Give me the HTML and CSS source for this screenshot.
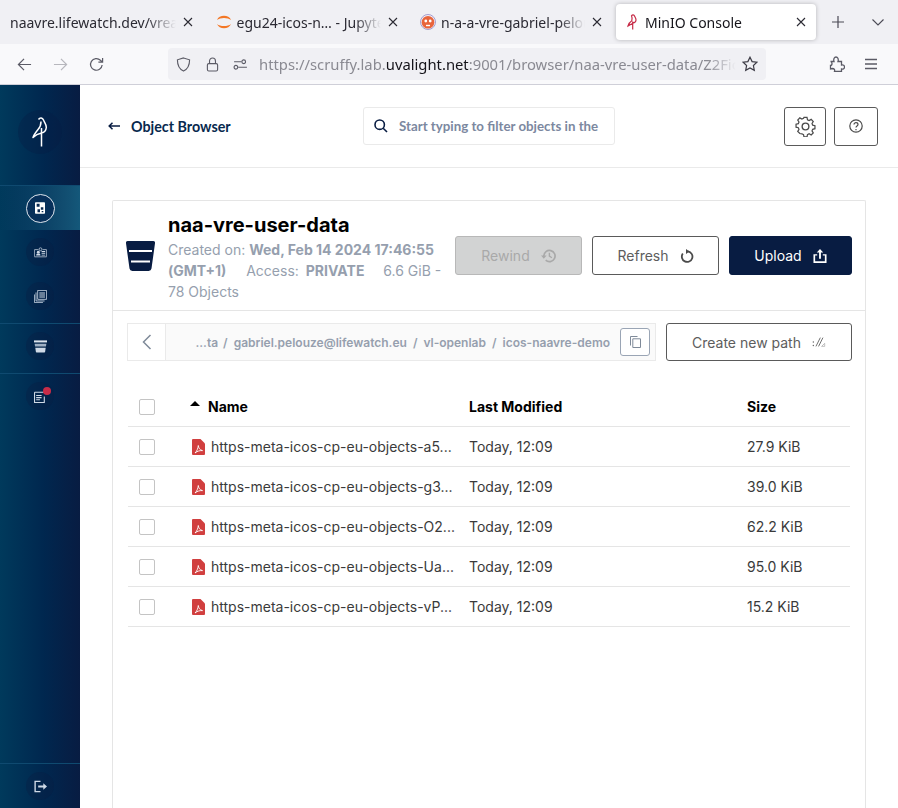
FILE: index.html
```html
<!DOCTYPE html>
<html lang="en">
<head>
<meta charset="utf-8">
<title>MinIO Console</title>
<link rel="stylesheet" href="styles.css">
</head>
<body>
<div class="tabbar">
  <div class="tab">
    <span class="tab-title tab-plain">naavre.lifewatch.dev/vreapp</span>
    <svg class="close" viewBox="0 0 10 10"><path d="M1 1l8 8M9 1l-8 8"/></svg>
  </div>
  <div class="tab">
    <svg class="favicon" viewBox="0 0 16 16"><path d="M1 6C3 .4 13 .4 15 6C12 3.2 4 3.200 1 6ZM1 10C3 15.600 13 15.600 15 10C12 12.800 4 12.800 1 10Z" fill="#f37726"/></svg>
    <span class="tab-title">egu24-icos-n… - JupyterLab</span>
    <svg class="close" viewBox="0 0 10 10"><path d="M1 1l8 8M9 1l-8 8"/></svg>
  </div>
  <div class="tab">
    <svg class="favicon" viewBox="0 0 16 16"><circle cx="8" cy="8" r="7.500" fill="#f4f0f4" stroke="#8f86c4" stroke-width=".8"/><circle cx="8" cy="8.300" r="6.300" fill="#e8643c"/><circle cx="5.800" cy="7" r="1.400" fill="#fff"/><circle cx="10.200" cy="7" r="1.400" fill="#fff"/><path d="M6 11.500h4" stroke="#fff" stroke-width="1.400"/></svg>
    <span class="tab-title">n-a-a-vre-gabriel-pelouze</span>
    <svg class="close" viewBox="0 0 10 10"><path d="M1 1l8 8M9 1l-8 8"/></svg>
  </div>
  <div class="tab tab-active">
    <svg class="favicon favicon-small" viewBox="0 0 10 16"><path d="M4.500 1.800C5.500 .3 7 .6 7.500 2C8 3.400 9.200 4.400 9 6.200C8.800 8 7.400 8.800 5.800 9.200L1 12C1.500 9.800 3 8 4.800 6.800C5.400 5.200 5.200 3.400 4.500 1.800ZM5.700 7.500V15.500" fill="none" stroke="#c72c48" stroke-width="1.200"/></svg>
    <span class="tab-title tab-dark">MinIO Console</span>
    <svg class="close" viewBox="0 0 10 10"><path d="M1 1l8 8M9 1l-8 8"/></svg>
  </div>
  <svg class="tab-add" viewBox="0 0 12 12"><path d="M6 0v12M0 6h12"/></svg>
  <svg class="tab-list" viewBox="0 0 12 7"><path d="M.5.5L6 6l5.500-5.500"/></svg>
</div>

<div class="toolbar">
  <svg class="nav-icon nav-back" viewBox="0 0 16 16"><path d="M15 8H1.500M7.500 2L1.500 8l6 6"/></svg>
  <svg class="nav-icon nav-forward" viewBox="0 0 16 16"><path d="M1 8h13.500M8.500 2l6 6-6 6"/></svg>
  <svg class="nav-icon nav-reload" viewBox="0 0 16 16"><path d="M14 8.500A6.200 6.200 0 1 1 12.200 3.500L14 5.200M14.500 1v4.500H10"/></svg>
  <div class="urlbar">
    <svg class="url-icon url-shield" viewBox="0 0 16 16"><path d="M8 1L14.500 3C14.500 9 12.500 13 8 15C3.500 13 1.500 9 1.500 3Z"/></svg>
    <svg class="url-icon url-lock" viewBox="0 0 14 16"><rect x="1.500" y="7" width="11" height="8" rx="1.500"/><path d="M3.800 7V4.200a3.200 3.200 0 0 1 6.400 0V7"/></svg>
    <svg class="url-icon url-perm" viewBox="0 0 16 12"><circle cx="11.500" cy="3" r="2"/><circle cx="3" cy="9" r="2"/><path d="M1 3h8M5.500 9H15"/></svg>
    <span class="url-text">https://scruffy.lab.<b>uvalight.net</b>:9001/browser/naa-vre-user-data/Z2FicmllbC5wZWxvdXpl</span>
    <svg class="url-icon url-star" viewBox="0 0 16 16"><path d="M8 1.200l2.100 4.400 4.800.6-3.500 3.300.9 4.800L8 12l-4.300 2.300.9-4.800L1.100 6.200l4.800-.6Z"/></svg>
  </div>
  <svg class="nav-icon nav-ext" viewBox="0 0 16 16"><path d="M1.500 5.500H5C4.200 3 5.400 1 7 1s2.800 2 2 4.500h3.500V9c1.800-.5 3 .6 3 2s-1.200 2.500-3 2v2.500H5.500c.6-2-.6-3-2-3l-2 .5V9.500c1 0 1.500-.5 1.500-2s-.5-2-1.500-2Z"/></svg>
  <svg class="nav-icon nav-menu" viewBox="0 0 14 12"><path d="M1 1.500h12M1 6h12M1 10.500h12"/></svg>
</div>

<div class="app">
  <aside class="sidebar">
    <div class="logo">
      <div class="logo-ring">
        <svg viewBox="0 0 16 30" class="logo-bird"><path d="M6.500 2.500C8 .2 10.500 .5 11.500 3C12.500 5.500 14.500 7.500 14.300 10.500C14 13.500 12 15.500 9.500 16C7 16.500 4 17.500 1 20.500C2 17.500 4 15 6 12.500C8 10.500 9 8 9 4.500M9.500 11V29.500" fill="none" stroke="#fff" stroke-width="1.500" stroke-linejoin="round"/></svg>
      </div>
    </div>
    <div class="side-group side-group-first">
      <div class="side-item side-item-active">
        <span class="side-ring side-ring-on">
          <svg class="side-icon" viewBox="0 0 12 14"><path d="M0 1a1 1 0 0 1 1-1h10a1 1 0 0 1 1 1v12a1 1 0 0 1-1 1H1a1 1 0 0 1-1-1Z" fill="#fff"/><path d="M2 2h3.500v3.500H2ZM7 6h3v3H7ZM3 8.500h3v3.500H3ZM8 10.500h2V12H8Z" fill="#0a2a52"/></svg>
        </span>
      </div>
      <div class="side-item">
        <span class="side-ring">
          <svg class="side-icon side-dim" viewBox="0 0 18 14"><path d="M1 3h5M12 3h5a.5.5 0 0 1 .5.5v9a.5.5 0 0 1-.5.5H1a.5.5 0 0 1-.5-.5v-9A.5.5 0 0 1 1 3" fill="none" stroke="#cfd9e6"/><circle cx="6" cy="6.500" r="2" fill="#cfd9e6"/><path d="M3 11c0-2 1.500-2.500 3-2.500s3 .5 3 2.500ZM10.500 5h5v1.200h-5ZM10.500 7.500h5v1.200h-5ZM10.500 10h5v1.200h-5Z" fill="#cfd9e6"/><circle cx="9" cy="2.500" r="2" fill="none" stroke="#cfd9e6"/></svg>
        </span>
      </div>
      <div class="side-item">
        <span class="side-ring">
          <svg class="side-icon side-dim" viewBox="0 0 16 16"><path d="M4.500 .5h11v11h-11Z M2.500 3v10.500H13 M.5 5.500v10H11" fill="none" stroke="#cfd9e6"/><path d="M6.500 3h7v1.200h-7ZM6.500 5.500h7v1.200h-7ZM6.500 8h7v1.200h-7Z" fill="#cfd9e6"/></svg>
        </span>
      </div>
    </div>
    <div class="side-group">
      <div class="side-item">
        <span class="side-ring">
          <svg class="side-icon side-dim" viewBox="0 0 16 15"><path d="M0 0h16v2.500H0Z" fill="#dbe3ec"/><path d="M.8 4h14.400l-.5 3.500H1.300Z" fill="#9fb0c4"/><path d="M1.600 9h12.800l-.7 5a1 1 0 0 1-1 1H3.300a1 1 0 0 1-1-1Z" fill="#cfd9e6"/></svg>
        </span>
      </div>
    </div>
    <div class="side-group">
      <div class="side-item">
        <span class="side-ring">
          <svg class="side-icon side-dim" viewBox="0 0 12 12"><path d="M.5 2h8.500M.5 2v9.500h9V6" fill="none" stroke="#cfd9e6"/><path d="M2 4.500h5v1H2ZM2 6.500h5v1H2ZM2 8.500h3.500v1H2Z" fill="#cfd9e6"/></svg>
          <i class="side-badge"></i>
        </span>
      </div>
    </div>
    <div class="side-group side-group-last">
      <div class="side-item">
        <span class="side-ring">
          <svg class="side-icon side-dim" viewBox="0 0 14 13"><path d="M7 1H1.200v11H7" fill="none" stroke="#cfd9e6" stroke-width="1.500"/><path d="M4.500 5.400h5.500V3l4 3.500-4 3.500V7.600H4.500Z" fill="#cfd9e6"/></svg>
        </span>
      </div>
    </div>
  </aside>

  <main class="content">
    <header class="page-head">
      <a class="back-link">
        <svg class="back-arrow" viewBox="0 0 12 8"><path d="M12 4H1.500M4.500 .8L1.200 4l3.300 3.200"/></svg>
        Object Browser
      </a>
      <div class="filter">
        <svg class="filter-icon" viewBox="0 0 14 14"><circle cx="5.700" cy="5.700" r="4.700"/><path d="M9.200 9.200L13 13"/></svg>
        <span class="filter-text">Start typing to filter objects in the bucket</span>
      </div>
      <div class="head-btns">
        <button class="head-btn head-btn-gear">
          <svg class="gear" viewBox="0 0 20 20"><path d="M8.400 1h3.200l.5 2.500 1.700.8 2.200-1.300 2.200 2.300-1.300 2.100.7 1.700 2.400.6v3.200l-2.400.6-.7 1.700 1.300 2.100-2.200 2.300-2.200-1.300-1.700.8-.5 2.500H8.400l-.5-2.500-1.700-.8L4 18l-2.200-2.300L3.100 13.600l-.7-1.700L0 11.300V8.100l2.400-.6.700-1.700L1.800 3.700 4 1.400l2.200 1.300 1.700-.8Z" transform="translate(1 .5) scale(.9)"/><circle cx="10" cy="10" r="3.200"/></svg>
        </button>
        <button class="head-btn head-btn-help">
          <svg class="help" viewBox="0 0 14 14"><circle cx="7" cy="7" r="6.200"/><path d="M5 5.500C5 3 9 3 9 5.500C9 7 7 7 7 8.500"/><path d="M7 10v1.200"/></svg>
        </button>
      </div>
    </header>

    <section class="card">
      <div class="bucket-info">
        <svg class="bucket-icon" viewBox="0 0 29 30"><path d="M2 0h25a2 2 0 0 1 2 2.300L25.500 27.500a3 3 0 0 1-3 2.500H6.500a3 3 0 0 1-3-2.500L0 2.300A2 2 0 0 1 2 0Z" fill="#081c42"/><path d="M3 10h23M5 20.500h19" stroke="#fff" stroke-width="2"/></svg>
        <div class="bucket-text">
          <h1 class="bucket-name">naa-vre-user-data</h1>
          <p class="bucket-meta">Created on: <b>Wed, Feb 14 2024 17:46:55 (GMT+1)</b> <span class="meta-access">Access:</span> <b class="meta-private">PRIVATE</b> <span class="meta-size">6.6 GiB - 78 Objects</span></p>
        </div>
        <div class="bucket-btns">
          <button class="btn btn-disabled">Rewind
            <svg class="btn-icon" viewBox="0 0 16 14"><path d="M3 7A6 6 0 1 1 5 11.500" fill="none" stroke="#a9a9a9" stroke-width="1.800"/><path d="M0 6.500h6L3 10ZM8.200 3.500h1.500v3.300l2.300 1.400-.7 1.100-3.100-1.800Z" fill="#a9a9a9"/></svg>
          </button>
          <button class="btn btn-outline">Refresh
            <svg class="btn-icon" viewBox="0 0 14 14"><path d="M8 2.400A5.300 5.300 0 1 1 2.800 4.600" fill="none" stroke="#4b4b4b" stroke-width="1.800"/><path d="M6 0v5l3.500-2.500Z" fill="#4b4b4b"/></svg>
          </button>
          <button class="btn btn-primary">Upload
            <svg class="btn-icon" viewBox="0 0 14 15"><path d="M7 0l3.500 3.800H8V10.500H6V3.800H3.500ZM0 5.500h4V7H1.800v6.200h10.400V7H10V5.500h4V15H0Z" fill="#fff"/></svg>
          </button>
        </div>
      </div>

      <div class="objects">
        <div class="path-row">
          <div class="path-box">
            <div class="path-back">
              <svg viewBox="0 0 10 16"><path d="M8.500 1L1.500 8l7 7"/></svg>
            </div>
            <div class="path-crumbs"><span class="crumb-first">...ta</span><i>/</i><span>gabriel.pelouze@lifewatch.eu</span><i>/</i><span>vl-openlab</span><i>/</i><span>icos-naavre-demo</span></div>
            <button class="copy-btn">
              <svg viewBox="0 0 11 12"><path d="M.5 9.500V.5h7"/><path d="M2.800 2.800h7.700v8.700H2.800Z"/></svg>
            </button>
          </div>
          <button class="btn btn-outline btn-path">Create new path
            <svg class="path-icon" viewBox="0 0 16 12"><path d="M4.500 11L9.500 1M7.500 11L12.500 1" stroke="#5d5d5d" stroke-width="1"/><circle cx="1.500" cy="6" r=".8" fill="#5d5d5d"/><circle cx="1.500" cy="10" r=".8" fill="#5d5d5d"/><path d="M11 11l3.500-3.500V11Z" fill="none" stroke="#a8a8a8" stroke-width=".8"/></svg>
          </button>
        </div>

        <div class="table">
          <div class="row row-head">
            <span class="check"></span>
            <span class="col-name"><i class="sort-up"></i>Name</span>
            <span class="col-date">Last Modified</span>
            <span class="col-size">Size</span>
          </div>
          <div class="row">
            <span class="check"></span>
            <span class="col-name"><svg class="pdf" viewBox="0 0 13 16"><use href="#pdf"/></svg>https-meta-icos-cp-eu-objects-a5...</span>
            <span class="col-date">Today, 12:09</span>
            <span class="col-size">27.9 KiB</span>
          </div>
          <div class="row">
            <span class="check"></span>
            <span class="col-name"><svg class="pdf" viewBox="0 0 13 16"><use href="#pdf"/></svg>https-meta-icos-cp-eu-objects-g3...</span>
            <span class="col-date">Today, 12:09</span>
            <span class="col-size">39.0 KiB</span>
          </div>
          <div class="row">
            <span class="check"></span>
            <span class="col-name"><svg class="pdf" viewBox="0 0 13 16"><use href="#pdf"/></svg>https-meta-icos-cp-eu-objects-O2...</span>
            <span class="col-date">Today, 12:09</span>
            <span class="col-size">62.2 KiB</span>
          </div>
          <div class="row">
            <span class="check"></span>
            <span class="col-name"><svg class="pdf" viewBox="0 0 13 16"><use href="#pdf"/></svg>https-meta-icos-cp-eu-objects-Ua...</span>
            <span class="col-date">Today, 12:09</span>
            <span class="col-size">95.0 KiB</span>
          </div>
          <div class="row">
            <span class="check"></span>
            <span class="col-name"><svg class="pdf" viewBox="0 0 13 16"><use href="#pdf"/></svg>https-meta-icos-cp-eu-objects-vP...</span>
            <span class="col-date">Today, 12:09</span>
            <span class="col-size">15.2 KiB</span>
          </div>
        </div>
      </div>
    </section>
  </main>
</div>

<svg class="defs" width="0" height="0">
  <symbol id="pdf" viewBox="0 0 13 16">
    <path d="M1 0h7.500L13 4.500V15a1 1 0 0 1-1 1H1a1 1 0 0 1-1-1V1a1 1 0 0 1 1-1Z" fill="#d13f3f"/>
    <path d="M6.300 6.500C6.600 9 7.800 11 10.500 11.600C8 11.400 5.500 12 3 14C4.800 12.500 6 9.500 6.300 6.500Z" fill="none" stroke="#fff" stroke-width=".9"/>
  </symbol>
</svg>
</body>
</html>
```

FILE: styles.css
```css
html, body {
  margin: 0;
  height: 808px;
  overflow: hidden;
  background: #fff;
  font-family: "Inter", "Liberation Sans", sans-serif;
}
button {
  font-family: inherit;
  cursor: pointer;
}

/* browser chrome */
.tabbar {
  height: 44px;
  background: #f0f0f4;
  display: flex;
  align-items: center;
  padding-left: 3px;
  box-sizing: border-box;
  font-family: "Noto Sans", sans-serif;
  font-size: 14px;
  color: #2b2a33;
}
.tab {
  width: 200px;
  height: 36px;
  margin-right: 4.5px;
  padding: 0 10px 0 7px;
  box-sizing: border-box;
  display: flex;
  align-items: center;
  flex: none;
}
.tab-active {
  background: #fff;
  border-radius: 4px;
  box-shadow: 0 0 4px rgba(0, 0, 0, .25);
  margin-left: -.5px;
  padding-left: 11px;
}
.tab-title {
  flex: 1;
  min-width: 0;
  white-space: nowrap;
  overflow: hidden;
  -webkit-mask-image: linear-gradient(to right, #000 82%, transparent);
  mask-image: linear-gradient(to right, #000 82%, transparent);
}
.tab-dark {
  color: #15141a;
}
.favicon {
  width: 16px;
  height: 16px;
  margin: 0 5px 0 1px;
  flex: none;
}
.favicon-small {
  width: 10px;
  margin: 0 8px 0 0;
}
.close {
  width: 10px;
  height: 10px;
  margin-left: 7px;
  flex: none;
  fill: none;
  stroke: #2b2a33;
  stroke-width: 1.1;
}
.tab-add {
  width: 12px;
  height: 12px;
  margin-left: 11.5px;
  fill: none;
  stroke: #4b4a55;
  stroke-width: 1.2;
}
.tab-list {
  width: 12px;
  height: 7px;
  margin-left: 28px;
  fill: none;
  stroke: #4b4a55;
  stroke-width: 1.1;
}

.toolbar {
  height: 41px;
  box-sizing: border-box;
  background: #f9f9fb;
  border-bottom: 1px solid #cfcfd8;
  display: flex;
  align-items: center;
  padding-left: 17px;
}
.nav-icon {
  flex: none;
  fill: none;
  stroke: #5b5b66;
  stroke-width: 1.3;
  width: 15px;
  height: 15px;
}
.nav-forward {
  margin-left: 21px;
  stroke: #b7b7bd;
}
.nav-reload {
  margin-left: 21px;
}
.urlbar {
  width: 598px;
  height: 32px;
  margin: 0 0 0 64px;
  background: #f0f0f4;
  border-radius: 4px;
  display: flex;
  align-items: center;
  padding-left: 8px;
  box-sizing: border-box;
  flex: none;
}
.url-icon {
  flex: none;
  fill: none;
  stroke: #5b5b66;
  stroke-width: 1.2;
}
.url-shield {
  width: 15px;
  height: 15px;
}
.url-lock {
  width: 13px;
  height: 15px;
  margin-left: 15px;
}
.url-perm {
  width: 15px;
  height: 11px;
  margin-left: 14px;
}
.url-text {
  margin-left: 11px;
  width: 477px;
  flex: none;
  overflow: hidden;
  white-space: nowrap;
  font-family: "Noto Sans", sans-serif;
  font-size: 14.8px;
  color: #8a8a92;
  -webkit-mask-image: linear-gradient(to right, #000 94%, transparent);
  mask-image: linear-gradient(to right, #000 94%, transparent);
}
.url-text b {
  font-weight: 400;
  color: #15141a;
}
.url-star {
  width: 16px;
  height: 16px;
  margin-left: 6px;
  stroke: #3c3b45;
}
.nav-ext {
  width: 16px;
  height: 16px;
  margin-left: 63px;
}
.nav-menu {
  width: 14px;
  height: 12px;
  margin-left: 19px;
}

/* app */
.app {
  display: flex;
  height: 723px;
}
.sidebar {
  width: 80px;
  flex: none;
  background: linear-gradient(90deg, #003a5c 0%, #00274f 55%, #081c42 100%);
  display: flex;
  flex-direction: column;
}
.logo {
  height: 100px;
  display: flex;
  justify-content: center;
  padding-top: 25px;
  box-sizing: border-box;
}
.logo-ring {
  width: 44px;
  height: 44px;
  border-radius: 50%;
  background: rgba(8, 28, 66, .3);
  display: flex;
  justify-content: center;
  align-items: center;
}
.logo-bird {
  width: 16px;
  height: 30px;
}
.side-group {
  border-top: 1px solid #0f4a70;
  height: 50px;
  box-sizing: border-box;
  display: flex;
  flex-direction: column;
}
.side-group-first {
  height: 138px;
  padding-bottom: 4px;
}
.side-group-last {
  margin-top: auto;
  height: 45px;
  justify-content: center;
}
.side-item {
  height: 44px;
  flex: none;
  display: flex;
  justify-content: center;
  align-items: center;
}
.side-item-active {
  background: linear-gradient(90deg, rgba(8, 70, 104, 0) 0%, #14587a 100%);
}
.side-ring {
  width: 28px;
  height: 28px;
  border-radius: 50%;
  background: rgba(8, 28, 66, .35);
  display: flex;
  justify-content: center;
  align-items: center;
  position: relative;
}
.side-ring-on {
  width: 29px;
  height: 29px;
  box-sizing: border-box;
  border: 1.5px solid #dfe6ee;
  background: #07305a;
}
.side-icon {
  width: 10px;
  height: 12px;
}
.side-dim {
  width: 13px;
  height: 13px;
}
.side-badge {
  position: absolute;
  top: 5px;
  right: 3px;
  width: 8px;
  height: 8px;
  border-radius: 50%;
  background: #c72c48;
}

.content {
  flex: 1;
  min-width: 0;
}
.page-head {
  height: 83px;
  box-sizing: border-box;
  border-bottom: 1px solid #eaeaea;
  display: flex;
  align-items: center;
  padding: 0 20px 0 28px;
}
.back-link {
  width: 255px;
  flex: none;
  font-family: "Lato", sans-serif;
  font-weight: 700;
  font-size: 14.3px;
  color: #07294e;
  display: flex;
  align-items: center;
}
.back-arrow {
  width: 12px;
  height: 8px;
  margin-right: 11px;
  fill: none;
  stroke: #081c42;
  stroke-width: 1.5;
}
.filter {
  width: 252px;
  height: 38px;
  box-sizing: border-box;
  border: 1px solid #eaeaea;
  border-radius: 3px;
  display: flex;
  align-items: center;
  padding-left: 10px;
  flex: none;
  overflow: hidden;
}
.filter-icon {
  width: 14px;
  height: 14px;
  margin-right: 11px;
  flex: none;
  fill: none;
  stroke: #081c42;
  stroke-width: 1.6;
}
.filter-text {
  font-family: "Lato", sans-serif;
  font-weight: 700;
  font-size: 13.3px;
  color: #7c88a0;
  white-space: nowrap;
  overflow: hidden;
  width: 201px;
  flex: none;
}
.head-btns {
  margin-left: auto;
  display: flex;
  gap: 8px;
}
.head-btn {
  height: 39px;
  padding: 0;
  border: 1px solid #5a5a5a;
  border-radius: 3px;
  background: #fff;
  display: flex;
  justify-content: center;
  align-items: center;
}
.head-btn-gear {
  width: 42px;
}
.head-btn-help {
  width: 44px;
}
.gear {
  width: 21px;
  height: 21px;
  fill: none;
  stroke: #4b4b4b;
  stroke-width: 1.3;
}
.help {
  width: 14px;
  height: 14px;
  fill: none;
  stroke: #4b4b4b;
  stroke-width: 1.2;
}

.card {
  margin: 32px 0 0 32px;
  width: 754px;
  height: 608px;
  box-sizing: border-box;
  border: 1px solid #e5e5e5;
  border-bottom: none;
  border-radius: 2px 2px 0 0;
}
.bucket-info {
  height: 110px;
  box-sizing: border-box;
  border-bottom: 1px solid #e5e5e5;
  display: flex;
  align-items: center;
  padding: 0 13px;
}
.bucket-icon {
  width: 29px;
  height: 30px;
  flex: none;
  margin: 0 13px 0 0;
}
.bucket-text {
  width: 280px;
  flex: none;
  align-self: flex-start;
  padding-top: 12px;
}
.bucket-name {
  margin: 0;
  font-size: 20px;
  line-height: 24px;
  font-weight: 700;
  color: #000;
}
.bucket-meta {
  margin: 2px 0 0;
  font-size: 14px;
  line-height: 21px;
  color: #969fae;
}
.bucket-meta b {
  font-weight: 700;
}
.meta-access {
  margin-left: 16px;
}
.meta-private {
  margin-left: 3px;
}
.meta-size {
  margin-left: 15px;
}
.bucket-btns {
  margin-left: 7px;
  display: flex;
  gap: 10px;
  flex: none;
}
.btn {
  height: 39px;
  width: 127px;
  box-sizing: border-box;
  border-radius: 3px;
  border: 1px solid #5a5a5a;
  background: #fff;
  color: #5d5d5d;
  font-size: 14px;
  padding: 0;
  display: flex;
  justify-content: center;
  align-items: center;
  gap: 11px;
}
.btn-disabled {
  background: #d2d3d3;
  border-color: #b8b8b8;
  color: #a9a9a9;
}
.btn-primary {
  width: 123px;
  background: #081c42;
  border-color: #081c42;
  color: #fff;
}
.btn-icon {
  width: 14px;
  height: 14px;
}
.btn-disabled .btn-icon {
  width: 15px;
}

.path-row {
  display: flex;
  padding: 12px 13px 0 14px;
  gap: 10px;
}
.path-box {
  width: 529px;
  height: 38px;
  box-sizing: border-box;
  border: 1px solid #eaeaea;
  background: #fafafa;
  display: flex;
  align-items: center;
  flex: none;
}
.path-back {
  width: 38px;
  height: 36px;
  box-sizing: border-box;
  background: #fff;
  border-right: 1px solid #eaeaea;
  display: flex;
  justify-content: center;
  align-items: center;
  flex: none;
}
.path-back svg {
  width: 10px;
  height: 16px;
  fill: none;
  stroke: #7f8a99;
  stroke-width: 1.5;
}
.path-crumbs {
  flex: 1;
  display: flex;
  justify-content: flex-end;
  font-size: 12px;
  font-weight: 600;
  color: #969fae;
  white-space: nowrap;
  gap: 6px;
  padding-right: 10px;
}
.crumb-first {
  margin-right: -1px;
}
.path-crumbs i {
  font-style: normal;
}
.copy-btn {
  width: 30px;
  height: 28px;
  margin-right: 5px;
  padding: 0;
  border: 1px solid #9aa5b5;
  border-radius: 3px;
  background: #fff;
  display: flex;
  justify-content: center;
  align-items: center;
  flex: none;
}
.copy-btn svg {
  width: 11px;
  height: 12px;
  fill: none;
  stroke: #7f8a99;
}
.btn-path {
  width: 186px;
  height: 38px;
}
.path-icon {
  width: 14px;
  height: 12px;
}

.table {
  margin: 26px 15px 0 15px;
}
.row {
  height: 40px;
  box-sizing: border-box;
  border-bottom: 1px solid #e5e5e5;
  display: grid;
  grid-template-columns: 63px 278px 278px 1fr;
  align-items: center;
  font-size: 14px;
  color: #3a3a3a;
}
.row-head {
  font-weight: 700;
  color: #000;
}
.check {
  width: 16px;
  height: 16px;
  box-sizing: border-box;
  margin-left: 11px;
  border: 1px solid #c4c4c4;
  border-radius: 2px;
  background: #fff;
}
.col-name {
  display: flex;
  align-items: center;
  white-space: nowrap;
}
.sort-up {
  width: 0;
  height: 0;
  margin: -7px 8px 0 -1px;
  border-left: 5.5px solid transparent;
  border-right: 5.5px solid transparent;
  border-bottom: 5.5px solid #000;
}
.pdf {
  width: 13px;
  height: 16px;
  margin: 0 6px 0 1px;
  flex: none;
}
.defs {
  position: absolute;
}
```
